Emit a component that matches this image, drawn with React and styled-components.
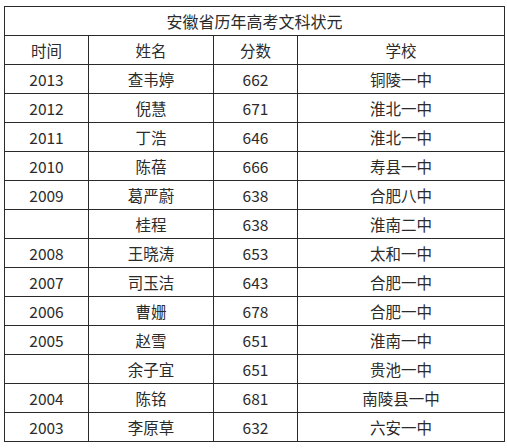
import React from "react";
import styled, { createGlobalStyle } from "styled-components";

const GlobalStyle = createGlobalStyle`
  html, body {
    margin: 0;
    padding: 0;
    background: #ffffff;
  }
  body {
    font-family: "Noto Sans CJK SC", "Liberation Sans", sans-serif;
    color: #2b2b2b;
  }
`;

const Page = styled.div`
  padding: 6px 0 0 4px;
`;

const Table = styled.table`
  width: 500px;
  border-collapse: collapse;
  table-layout: fixed;
  font-size: 15.5px;
`;

const Title = styled.th`
  height: 28px;
  padding: 0;
  border: 1px solid #2a2a2a;
  font-weight: normal;
  font-size: 16px;
  text-align: center;
`;

const Cell = styled.td`
  height: 28px;
  padding: 0;
  border: 1px solid #2a2a2a;
  text-align: center;
  line-height: 28px;
  white-space: nowrap;
`;

const Col = styled.col`
  width: ${(p) => p.$w}px;
`;

const rows = [
  ["2013", "查韦婷", "662", "铜陵一中"],
  ["2012", "倪慧", "671", "淮北一中"],
  ["2011", "丁浩", "646", "淮北一中"],
  ["2010", "陈蓓", "666", "寿县一中"],
  ["2009", "葛严蔚", "638", "合肥八中"],
  ["", "桂程", "638", "淮南二中"],
  ["2008", "王晓涛", "653", "太和一中"],
  ["2007", "司玉洁", "643", "合肥一中"],
  ["2006", "曹姗", "678", "合肥一中"],
  ["2005", "赵雪", "651", "淮南一中"],
  ["", "余子宜", "651", "贵池一中"],
  ["2004", "陈铭", "681", "南陵县一中"],
  ["2003", "李原草", "632", "六安一中"],
];

export default function App() {
  return (
    <Page>
      <GlobalStyle />
      <Table>
        <colgroup>
          <Col $w={84} />
          <Col $w={125} />
          <Col $w={84} />
          <Col $w={207} />
        </colgroup>
        <thead>
          <tr>
            <Title colSpan={4}>安徽省历年高考文科状元</Title>
          </tr>
          <tr>
            <Cell>时间</Cell>
            <Cell>姓名</Cell>
            <Cell>分数</Cell>
            <Cell>学校</Cell>
          </tr>
        </thead>
        <tbody>
          {rows.map((r, i) => (
            <tr key={i}>
              {r.map((c, j) => (
                <Cell key={j}>{c}</Cell>
              ))}
            </tr>
          ))}
        </tbody>
      </Table>
    </Page>
  );
}
